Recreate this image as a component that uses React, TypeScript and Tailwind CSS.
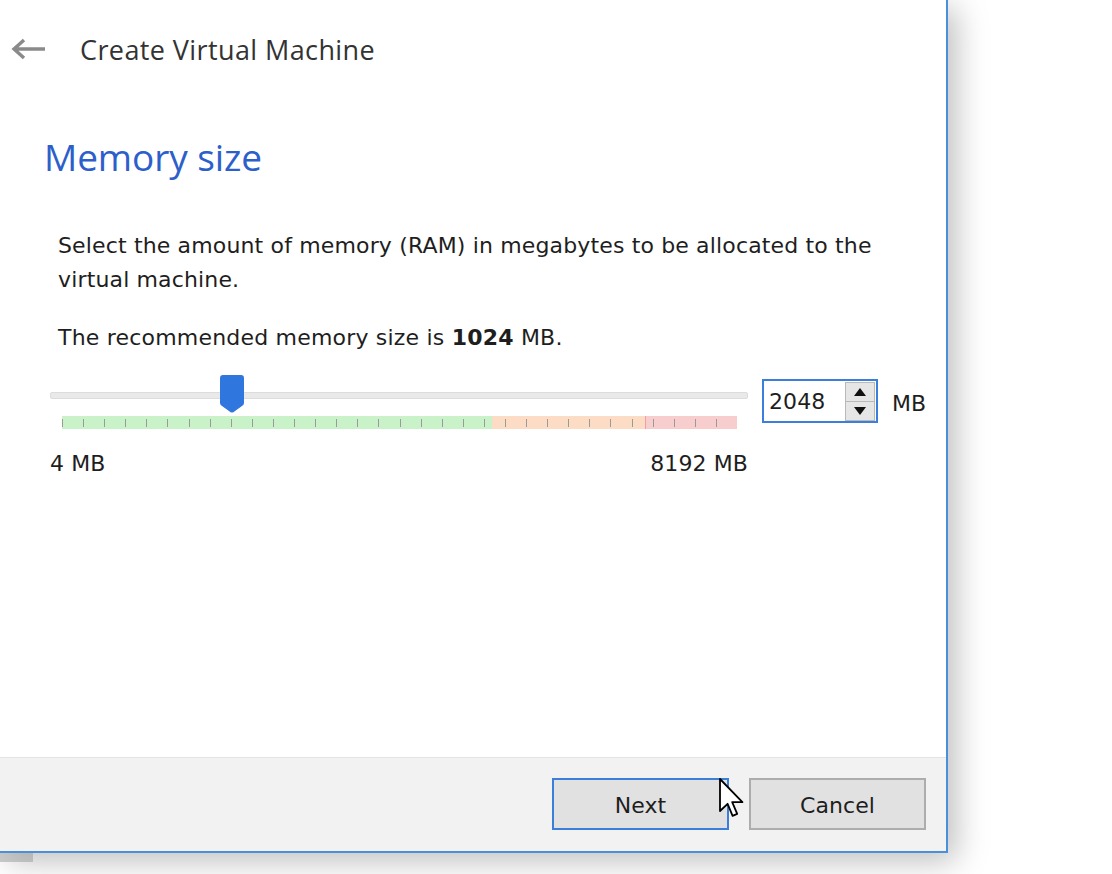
import React from "react";

const TICK_COUNT = 32;
const BAND_WIDTH = 675;

const bodyFont = { fontFamily: '"DejaVu Sans", Verdana, sans-serif' };

function SliderHandle() {
  return (
    <svg width="24" height="39" viewBox="0 0 24 39" className="absolute left-[170px] top-0">
      <path
        d="M3 0 H21 Q24 0 24 3 V28 Q24 30 22 31 L15 36 Q12 39 9 36 L2 31 Q0 30 0 28 V3 Q0 0 3 0 Z"
        fill="#2f76df"
      />
    </svg>
  );
}

function Cursor() {
  return (
    <svg
      width="28"
      height="44"
      viewBox="0 0 14 22"
      className="pointer-events-none absolute left-[-1px] top-[-1px]"
    >
      <path
        d="M1 1 L1 17 L4.8 13.4 L7.3 19.4 L9.6 18.4 L7.1 12.6 L12.2 12.6 Z"
        fill="#ffffff"
        stroke="#000000"
        strokeWidth="0.9"
        strokeLinejoin="round"
      />
    </svg>
  );
}

function TickBand() {
  const ticks = Array.from({ length: TICK_COUNT }, (_, i) => i);
  return (
    <div className="relative ml-[12px] h-[13px] w-[675px]">
      <div className="flex h-full w-full">
        <div className="h-full w-[430px] bg-[#c9f2c9]" />
        <div className="h-full w-[153px] bg-[#fcdcc4]" />
        <div className="h-full w-[92px] border-l border-[#f0a0a0] bg-[#f7cdcd]" />
      </div>
      {ticks.map((i) => (
        <div
          key={i}
          className="absolute top-[3px] h-[8px] w-px bg-[#9a9a9a]"
          style={{ left: (i * BAND_WIDTH) / TICK_COUNT }}
        />
      ))}
    </div>
  );
}

export default function App() {
  return (
    <div className="relative h-[874px] w-[1112px] overflow-hidden bg-white">
      {/* window shadow */}
      <div className="absolute left-0 top-0 h-[853px] w-[948px] shadow-[8px_8px_30px_rgba(0,0,0,0.26)]" />
      <div
        className="relative flex h-[853px] w-[948px] flex-col border-b-2 border-r-2 border-[#4a8fdc] bg-white"
        style={{ fontFamily: '"Open Sans", "Noto Sans", sans-serif' }}
      >
        {/* header */}
        <div className="flex h-[100px] items-center pb-[2px]">
          <svg width="36" height="24" viewBox="0 0 36 24" className="ml-[11px]">
            <path d="M34 12 H4 M13 3 L3 12 L13 21" stroke="#8a8a8a" strokeWidth="3.4" fill="none" />
          </svg>
          <span className="ml-[33px] text-[27px] leading-none tracking-[0.4px] text-[#333333]">
            Create Virtual Machine
          </span>
        </div>

        <div className="ml-[44px] mt-[38px] text-[37px] leading-none tracking-[-0.1px] text-[#2d5fcb]">
          Memory size
        </div>

        {/* body */}
        <div className="ml-[58px] mt-[54px] text-[22px] leading-[34px] text-[#1e1e1e]" style={bodyFont}>
          <p className="w-[830px] tracking-[0.15px]">
            Select the amount of memory (RAM) in megabytes to be allocated to the virtual machine.
          </p>
          <p className="mt-[24px] tracking-[0.2px]">
            The recommended memory size is <b>1024</b> MB.
          </p>
        </div>

        {/* slider row */}
        <div className="ml-[50px] mt-[20px] flex items-start" style={bodyFont}>
          <div className="flex w-[698px] flex-col">
            <div className="relative h-[41px]">
              <div className="absolute left-0 top-[17px] h-[7px] w-[698px] rounded-[2px] border border-[#dcdcdc] bg-[#e9e9e9]" />
              <SliderHandle />
            </div>
            <TickBand />
            <div className="mt-[24px] flex justify-between text-[22px] leading-none tracking-[0.1px] text-[#1e1e1e]">
              <span>4 MB</span>
              <span>8192 MB</span>
            </div>
          </div>

          <div className="ml-[14px] mt-[4px] flex h-[44px] w-[116px] items-center border-2 border-[#3c7fd8] bg-white">
            <span className="ml-[5px] flex-1 text-[22px] tracking-[0.1px] text-[#1e1e1e]">2048</span>
            <div className="mr-[1px] flex h-[39px] w-[30px] flex-col border border-[#b9b9b9] bg-[#e6e6e6]">
              <div className="flex flex-1 items-center justify-center border-b border-[#b9b9b9]">
                <svg width="12" height="8" viewBox="0 0 12 8">
                  <path d="M6 0 L12 8 H0 Z" fill="#111" />
                </svg>
              </div>
              <div className="flex flex-1 items-center justify-center">
                <svg width="12" height="8" viewBox="0 0 12 8">
                  <path d="M0 0 H12 L6 8 Z" fill="#111" />
                </svg>
              </div>
            </div>
          </div>
          <span className="ml-[14px] mt-[18px] text-[22px] leading-none tracking-[0.1px] text-[#1e1e1e]">MB</span>
        </div>

        {/* footer */}
        <div
          className="mt-auto flex h-[94px] items-start justify-end gap-[20px] border-t border-[#e3e3e3] bg-[#f2f2f2] pr-[20px] pt-[20px]"
          style={bodyFont}
        >
          <div className="relative">
            <button className="flex h-[52px] w-[177px] items-center justify-center border-2 border-[#3a7fd8] bg-[#e1e1e1] pt-[3px] text-[22px] tracking-[0.1px] text-[#1e1e1e]">
              Next
            </button>
            <div className="absolute left-[167px] top-0">
              <Cursor />
            </div>
          </div>
          <button className="flex h-[52px] w-[177px] items-center justify-center border-2 border-[#adadad] bg-[#e1e1e1] pt-[3px] text-[22px] tracking-[0.1px] text-[#1e1e1e]">
            Cancel
          </button>
        </div>
      </div>
      <div className="absolute left-0 top-[853px] h-[9px] w-[33px] bg-[#9a9a9a]/50" />
    </div>
  );
}
